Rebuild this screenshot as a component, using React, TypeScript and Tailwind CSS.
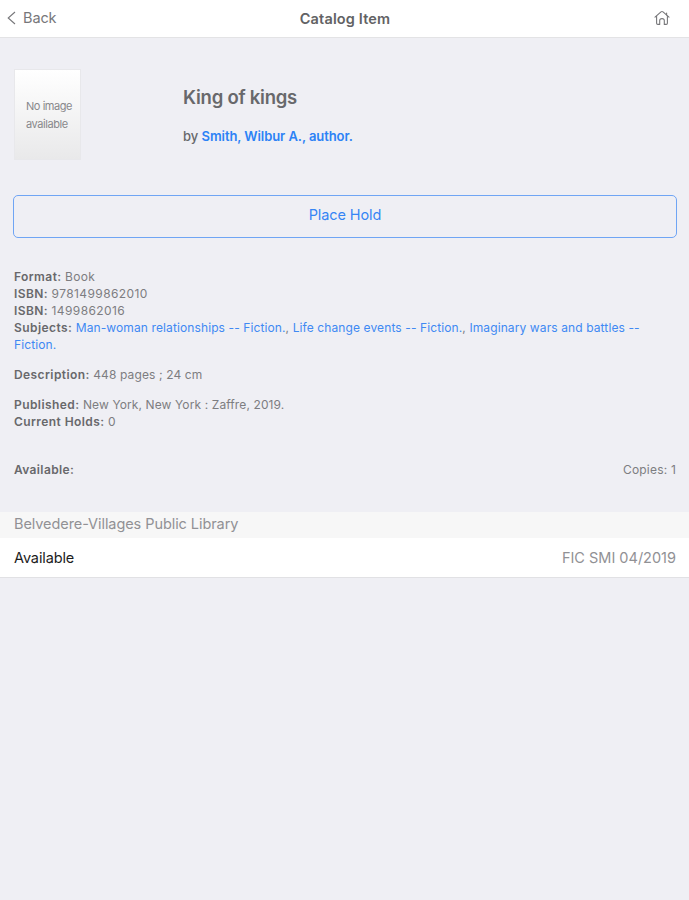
import type { ReactNode } from "react";

const subjects = [
  "Man-woman relationships -- Fiction.",
  "Life change events -- Fiction.",
  "Imaginary wars and battles -- Fiction.",
];

function Field({ label, children }: { label: string; children: ReactNode }) {
  return (
    <p>
      <span className="font-semibold tracking-[0.42px] text-[#68686b]">{label}:</span> {children}
    </p>
  );
}

export default function App() {
  return (
    <div className="min-h-screen bg-[#efeff4] font-['Inter',sans-serif] text-[#7d7d81]">
      <header className="grid h-[38px] grid-cols-[1fr_auto_1fr] items-center border-b border-[#e3e3e5] bg-white pl-[7px] pr-[7px]">
        <button className="flex items-center gap-[7px] pb-px text-[14.5px] tracking-[-0.1px] text-[#77777a]">
          <svg width="9" height="14" viewBox="0 0 9 14" fill="none" stroke="currentColor" strokeWidth="1.1">
            <path d="M8 1 1.2 7 8 13" />
          </svg>
          Back
        </button>
        <h1 className="pl-px text-center text-[14.5px] font-semibold tracking-[0.14px] text-[#626264]">Catalog Item</h1>
        <button className="mr-3 justify-self-end pb-px text-[#77777a]" aria-label="Home">
          <svg width="16" height="16" viewBox="0 0 16 16" fill="none" stroke="currentColor" strokeWidth="1.1" strokeLinejoin="round" strokeLinecap="round">
            <path d="M1 7.2 7 1.9Q8 1.1 9 1.9L15 7.2" />
            <path d="M2.6 6.3v6.9q0 1.2 1.2 1.2h1.9V10.6q0-2 2.3-2t2.3 2v3.8h1.9q1.2 0 1.2-1.2V6.3" />
            <path d="M12.6 3v2" />
          </svg>
        </button>
      </header>

      <main>
        <section className="flex pl-[14px] pt-[31px]">
          <div className="flex h-[91px] w-[67px] flex-col justify-center border border-[#e8e8eb] bg-gradient-to-b from-white to-[#e9e9ea] pl-[11px] pt-px text-[11px] leading-[18px] tracking-[-0.45px] text-[#88888b]">
            <span className="whitespace-nowrap">No image</span>
            <span>available</span>
          </div>
          <div className="ml-[102px] pt-[15px]">
            <h2 className="text-[18.5px] font-semibold leading-[26px] tracking-[-0.24px] text-[#68686b]">King of kings</h2>
            <p className="mt-[17px] text-[13px] font-medium leading-[18px] tracking-[-0.07px] text-[#68686b]">
              by <a className="font-semibold text-[#2c82f6]">Smith, Wilbur A., author.</a>
            </p>
          </div>
        </section>

        <div className="pl-[13px] pr-3 pt-[35px]">
          <button className="h-[43px] w-full rounded-[5px] border border-[#6fa5f4] pb-[3px] text-[14.5px] tracking-[-0.1px] text-[#3585f5]">
            Place Hold
          </button>
        </div>

        <section className="pl-[14px] pr-5 pt-[30px] text-[12px] leading-[17px] tracking-[0.11px]">
          <Field label="Format">
            <span className="tracking-[0.3px]">Book</span>
          </Field>
          <Field label="ISBN">
            <span className="tracking-[0.4px]">9781499862010</span>
          </Field>
          <Field label="ISBN">
            <span className="tracking-[0.4px]">1499862016</span>
          </Field>
          <Field label="Subjects">
            {subjects.map((subject, i) => (
              <span key={subject}>
                {i > 0 && ", "}
                <a className="text-[#4089f3]">{subject}</a>
              </span>
            ))}
          </Field>
          <div className="mt-[13px]">
            <Field label="Description">448 pages ; 24 cm</Field>
          </div>
          <div className="mt-[13px]">
            <Field label="Published">New York, New York : Zaffre, 2019.</Field>
            <Field label="Current Holds">0</Field>
          </div>
        </section>

        <div className="flex justify-between pb-[34px] pl-[14px] pr-[13px] pt-[31px] text-[12px] leading-[17px]">
          <span className="font-semibold tracking-[0.37px] text-[#68686b]">Available:</span>
          <span className="tracking-[0.2px]">Copies: 1</span>
        </div>

        <section>
          <h3 className="h-[26px] bg-[#f7f7f7] px-[14px] text-[14.5px] leading-[24px] tracking-[-0.07px] text-[#919195]">
            Belvedere-Villages Public Library
          </h3>
          <div className="flex h-10 items-center justify-between border-b border-[#e1e1e4] bg-white pl-[14px] pr-[13px] text-[14.5px]">
            <span className="tracking-[-0.12px] text-[#1c1c1c]">Available</span>
            <span className="text-[#919195]">FIC SMI 04/2019</span>
          </div>
        </section>
      </main>
    </div>
  );
}
